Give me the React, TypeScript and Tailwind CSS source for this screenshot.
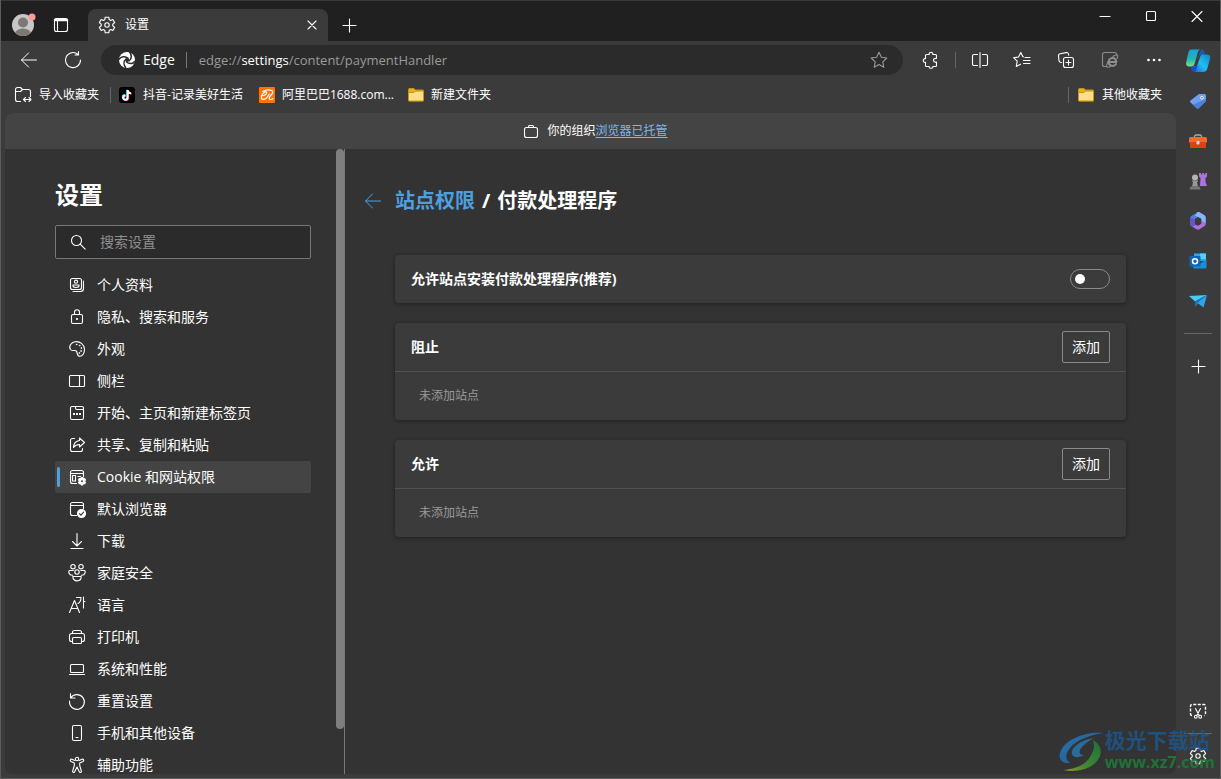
import React from 'react';

type IconProps = { children: React.ReactNode; className?: string; size?: number };

const Icon = ({ children, className = '', size = 20 }: IconProps) => (
  <svg
    width={size}
    height={size}
    viewBox="0 0 20 20"
    fill="none"
    stroke="currentColor"
    strokeWidth="1.1"
    strokeLinecap="round"
    strokeLinejoin="round"
    className={`shrink-0 ${className}`}
    aria-hidden="true"
  >
    {children}
  </svg>
);

const GearIcon = () => (
  <Icon>
    <path d="M8.2 2.2h3.6l.4 2.4 1.4.8 2.25-.85 1.8 3.1-1.9 1.55v1.6l1.9 1.55-1.8 3.1-2.25-.85-1.4.8-.4 2.4H8.2l-.4-2.4-1.4-.8-2.25.85-1.8-3.1 1.9-1.55V9.2l-1.9-1.55 1.8-3.1 2.25.85 1.4-.8z" />
    <circle cx="10" cy="10" r="2.2" />
  </Icon>
);

const BackIcon = () => (
  <Icon>
    <path d="M17.5 10H2.5M9.5 3l-7 7 7 7" strokeWidth="1" />
  </Icon>
);

const PlusIcon = () => (
  <Icon>
    <path d="M10.5 4v13M4 10.5h13" />
  </Icon>
);

const FolderIcon = () => (
  <svg width="16" height="16" viewBox="0 0 16 16" className="shrink-0" aria-hidden="true">
    <path d="M.5 2.5A1 1 0 0 1 1.5 1.5h4.500l1.500 1.500h7a1 1 0 0 1 1 1v9a1 1 0 0 1-1 1h-13a1 1 0 0 1-1-1z" fill="#e8b21e" stroke="#c69214" />
    <path d="M.5 5.500h5.500l1.500-1.500h8v9a1 1 0 0 1-1 1h-13a1 1 0 0 1-1-1z" fill="#ffdf87" stroke="#c69214" />
  </svg>
);

const EdgeIcon = () => (
  <svg width="16" height="16" viewBox="0 0 16 16" className="shrink-0" aria-hidden="true">
    <circle cx="8" cy="8" r="8" fill="#fff" />
    <circle cx="8.200" cy="8" r="2.100" fill="#2b2b2b" />
    <g fill="none" stroke="#2b2b2b" strokeWidth="1.500">
      <path d="M-.2 7.600C2 4.300 6 3.800 9.500 6.500" />
      <path d="M7 15.900C4.500 13.200 4.300 9.500 7 7" />
      <path d="M16 9.200c-2.200 3-6 3.200-8.800.5" />
      <path d="M10.500-.2c2.300 3 2.400 6.700-.6 9.500" />
    </g>
  </svg>
);

const TikTokIcon = () => (
  <svg width="16" height="16" viewBox="0 0 16 16" className="shrink-0" aria-hidden="true">
    <rect width="16" height="16" rx="3" fill="#000" />
    <g fill="none" strokeWidth="1.800">
      <path d="M8.100 2.700v7.500a2.200 2.200 0 1 1-2.200-2.200M8.100 2.900c.3 2 1.600 3 3.400 3.100" stroke="#25f4ee" />
      <path d="M9.300 3.500v7.500a2.200 2.200 0 1 1-2.200-2.200M9.300 3.700c.3 2 1.600 3 3.400 3.100" stroke="#fe2c55" />
      <path d="M8.700 3.100v7.500a2.200 2.200 0 1 1-2.200-2.200M8.700 3.300c.3 2 1.600 3 3.400 3.100" stroke="#fff" />
    </g>
  </svg>
);

const AlibabaIcon = () => (
  <svg width="16" height="16" viewBox="0 0 16 16" className="shrink-0" aria-hidden="true">
    <rect width="16" height="16" rx="1" fill="#ff7300" />
    <path
      d="M2.500 8.700c2.400.3 4.900-1 5.200-2.900.2-1.400-2.100-1.200-3.600.6-1.700 2-2.700 5.600-.4 6 2.500.4 5-2.500 6.400-5.200M3.800 4.400c3-1.800 7.200-1.600 9.300-.6 1.600.9.500 2.600-.7 3.800-1.600 1.600-2.800 3-2 4.300.7 1 2.300.7 3.600-.3"
      fill="none"
      stroke="#fff"
      strokeWidth="1.200"
      strokeLinecap="round"
    />
  </svg>
);

const menuItems = [
  {
    label: '个人资料',
    icon: (
      <>
        <rect x="3.500" y="3.500" width="11" height="11" rx="2" />
        <circle cx="9" cy="6.700" r="1.600" />
        <path d="M6 10h6v.8c0 2.200-6 2.200-6 0zM16.500 6v7.500a3 3 0 0 1-3 3H6" />
      </>
    ),
  },
  {
    label: '隐私、搜索和服务',
    icon: (
      <>
        <rect x="4.500" y="7.500" width="11" height="9" rx="1.500" />
        <path d="M7.500 7.500V5.200a2.500 2.500 0 0 1 5 0v2.300" />
        <circle cx="10" cy="12" r=".5" fill="currentColor" />
      </>
    ),
  },
  {
    label: '外观',
    icon: (
      <>
        <path d="M3.500 10.500C1.200 7.500 4.200 3.300 8 2.700c5-.8 9.300 2.800 9.500 7.600.1 3.800-2 7-4.700 7-3.300 0-2-3.800-3.500-5.300-1.500-1.600-3.700.9-5.800-1.500z" />
        <g fill="currentColor" strokeWidth=".8">
          <circle cx="9.500" cy="5.500" r=".4" />
          <circle cx="12.500" cy="6.500" r=".4" />
          <circle cx="14.200" cy="9" r=".4" />
          <circle cx="14" cy="12" r=".4" />
          <circle cx="12.200" cy="14" r=".4" />
        </g>
      </>
    ),
  },
  {
    label: '侧栏',
    icon: (
      <>
        <rect x="2.500" y="4.500" width="15" height="11" rx="1" />
        <path d="M12.500 4.500v11" />
      </>
    ),
  },
  {
    label: '开始、主页和新建标签页',
    icon: (
      <>
        <rect x="3.500" y="3.500" width="13" height="13" rx="1.500" />
        <path d="M8.500 3.500v1.500q0 1.500 1.500 1.500h6.500" />
        <path d="M6 11h2M9 11h2M12 11h2" strokeWidth="2" strokeLinecap="butt" />
      </>
    ),
  },
  {
    label: '共享、复制和粘贴',
    icon: (
      <>
        <path d="M7.500 3.500h-2a2 2 0 0 0-2 2v9a2 2 0 0 0 2 2h8a2 2 0 0 0 2-2v-1" />
        <path d="M12.500 3l5 4.500-5 4.500V9.500c-3 0-4.500 1-6 3 .2-4 2.200-6.500 6-7z" />
      </>
    ),
  },
  {
    label: 'Cookie 和网站权限',
    active: true,
    icon: (
      <>
        <path d="M16.500 9.500v-4a2 2 0 0 0-2-2h-9a2 2 0 0 0-2 2v9a2 2 0 0 0 2 2h4M3.500 6.500h13M11 9.500h2.500" />
        <rect x="5.500" y="8.500" width="3" height="5.500" />
        <path
          d="M14.200 10.500h1.600l.4 1.500 1.500-.4.800 1.400-1.100 1.200 1.100 1.200-.8 1.400-1.500-.4-.4 1.500h-1.600l-.4-1.500-1.500.4-.8-1.400 1.100-1.200-1.100-1.200.8-1.400 1.500.4z"
          fill="currentColor"
        />
        <circle cx="15" cy="14.200" r="1" fill="#444" stroke="none" />
      </>
    ),
  },
  {
    label: '默认浏览器',
    icon: (
      <>
        <path d="M16.500 9.500v-4a2 2 0 0 0-2-2h-9a2 2 0 0 0-2 2v9a2 2 0 0 0 2 2h4M3.500 6.500h13" />
        <circle cx="14.500" cy="14.500" r="4" fill="currentColor" />
        <path d="M12.500 14.700l1.400 1.400 2.700-2.900" stroke="#333" />
      </>
    ),
  },
  {
    label: '下载',
    icon: <path d="M10 2.500v12M5.500 10.500l4.500 4.500 4.500-4.500M4 17.500h12" />,
  },
  {
    label: '家庭安全',
    icon: (
      <>
        <circle cx="6" cy="3.700" r="2.200" />
        <circle cx="14" cy="3.700" r="2.200" />
        <circle cx="10" cy="9" r="2.200" />
        <path d="M6.200 7.500H2.700c-1.600 0-1.400 5 3 4.700M13.800 7.500h3.500c1.600 0 1.400 5-3 4.700M5.800 13.500h8.400c0 5.800-8.400 5.800-8.400 0z" />
      </>
    ),
  },
  {
    label: '语言',
    icon: <path d="M2.500 17.500L7.500 5.500l5 12M4.300 13.500h6.400M9.500 2.500h4.500c0 3-1 5-3 6M16.500 2v11M16.500 6.500h1.500" />,
  },
  {
    label: '打印机',
    icon: (
      <>
        <path d="M5.500 14.500h-1a2 2 0 0 1-2-2V8.500a2 2 0 0 1 2-2h11a2 2 0 0 1 2 2v4a2 2 0 0 1-2 2h-1" />
        <path d="M5.500 6.500v-1a2 2 0 0 1 2-2h5a2 2 0 0 1 2 2v1" />
        <rect x="5.500" y="10.500" width="9" height="6" rx="1" />
      </>
    ),
  },
  {
    label: '系统和性能',
    icon: (
      <>
        <rect x="3.500" y="5.500" width="13" height="8" rx="1" />
        <path d="M2.500 15.500h15" />
      </>
    ),
  },
  {
    label: '重置设置',
    icon: <path d="M3.500 2.500v4.500H8M3.700 7A7.400 7.400 0 1 1 2.600 10" />,
  },
  {
    label: '手机和其他设备',
    icon: (
      <>
        <rect x="5.500" y="2.500" width="9" height="15" rx="1.500" />
        <path d="M9 14.500h2" />
      </>
    ),
  },
  {
    label: '辅助功能',
    icon: (
      <>
        <circle cx="10" cy="4" r="1.700" />
        <path d="M7.800 5.500L5 4.300c-1.600-.6-2.400 1.400-1 2.100l3.300 1.500v2.600l-1.600 5.300c-.5 1.600 1.500 2.300 2.100.8L10 12l2.200 4.600c.6 1.500 2.600.8 2.100-.8l-1.600-5.300V7.900L16 6.400c1.400-.7.600-2.700-1-2.100l-2.800 1.200" />
      </>
    ),
  },
];

const toolbarButton = 'flex w-11 h-8 items-center justify-center';

const siteGroups = ['阻止', '允许'];

const TitleBar = () => (
  <header className="flex h-[41px] shrink-0 items-stretch bg-[#202020] border-t border-[#383838]">
    <div className="flex w-[87px] items-center gap-[14px] pt-2 pl-[10px]">
      <button aria-label="Profile">
        <svg width="26" height="26" viewBox="0 0 26 26" aria-hidden="true">
          <clipPath id="avatar">
            <circle cx="12" cy="13" r="11" />
          </clipPath>
          <circle cx="12" cy="13" r="11" fill="#c9c7c5" />
          <g clipPath="url(#avatar)" fill="#7b7875">
            <circle cx="12" cy="10.500" r="5" />
            <ellipse cx="12" cy="22" rx="8" ry="5.500" />
          </g>
          <circle cx="21" cy="5" r="3.500" fill="#ff9b94" />
        </svg>
      </button>
      <button aria-label="Tab actions">
        <Icon>
          <rect x="3.500" y="3.500" width="13" height="13" rx="2" />
          <path d="M4 5h12" strokeWidth="2.500" />
          <path d="M6.500 5v11.500" />
        </Icon>
      </button>
    </div>
    <div className="mt-2 flex w-60 items-center rounded-t-lg bg-[#3b3b3b] pr-1 pl-[9px]">
      <GearIcon />
      <span className="ml-2 flex-1 text-xs">设置</span>
      <button aria-label="Close tab" className="flex w-6 justify-center">
        <Icon>
          <path d="M6 6l8 8M14 6l-8 8" />
        </Icon>
      </button>
    </div>
    <button aria-label="New tab" className="ml-[11px] pt-2">
      <PlusIcon />
    </button>
    <div className="ml-auto flex h-[31px]">
      <button aria-label="Minimize" className="flex w-[46px] items-center justify-center">
        <Icon>
          <path d="M5 9.500h10" />
        </Icon>
      </button>
      <button aria-label="Maximize" className="flex w-[46px] items-center justify-center">
        <Icon>
          <rect x="5.500" y="4.500" width="9" height="9" rx="1" />
        </Icon>
      </button>
      <button aria-label="Close" className="flex w-[46px] items-center justify-center">
        <Icon>
          <path d="M5 4.500l10 10M15 4.500l-10 10" />
        </Icon>
      </button>
    </div>
  </header>
);

const Toolbar = () => (
  <div className="flex h-[38px] shrink-0 items-center pl-[6px]">
    <button aria-label="Back" className={toolbarButton}>
      <BackIcon />
    </button>
    <button aria-label="Refresh" className={toolbarButton}>
      <Icon>
        <path d="M17.500 10a7.500 7.500 0 1 1-2.500-5.500M15.500 1.500v3.500h-3.500" />
      </Icon>
    </button>
    <div className="ml-[6px] flex h-[30px] flex-1 items-center rounded-full bg-[#2b2b2b] pr-[14px] pl-[18px] text-sm">
      <EdgeIcon />
      <span className="ml-2">Edge</span>
      <span className="mr-3 ml-[11px] h-4 w-px bg-[#777]" />
      <span className="flex-1 text-[13px] text-[#9a9a9a]">
        edge://<span className="text-white">settings</span>/content/paymentHandler
      </span>
      <button aria-label="Add to favorites" className="text-[#9a9a9a]">
        <Icon>
          <path d="M10 2.300l2.400 5 5.400.7-4 3.800 1 5.500-4.800-2.700-4.800 2.700 1-5.500-4-3.800 5.400-.7z" />
        </Icon>
      </button>
    </div>
    <button aria-label="Extensions" className="ml-2 flex h-8 w-10 items-center justify-center">
      <Icon>
        <path d="M5.500 4.500h2.700c-.7-3 4.300-3 3.600 0h2.700a1 1 0 0 1 1 1v3c-4-1-4 4.500 0 3.500v3.500a1 1 0 0 1-1 1h-2.700c.8 2.400-4.400 2.400-3.600 0H5.500a1 1 0 0 1-1-1v-3.200c-3 .7-3-4.300 0-3.600V5.500a1 1 0 0 1 1-1z" />
      </Icon>
    </button>
    <span className="mx-1 h-4 w-px bg-[#666]" />
    <button aria-label="Split screen" className="flex h-8 w-10 items-center justify-center">
      <Icon>
        <path d="M7.500 4.500H4a1.500 1.500 0 0 0-1.500 1.500v8A1.500 1.500 0 0 0 4 15.500h3.500M12.500 4.500H16a1.500 1.500 0 0 1 1.500 1.500v8a1.500 1.500 0 0 1-1.500 1.500h-3.500M10 2.500v15" />
      </Icon>
    </button>
    <button aria-label="Favorites" className={toolbarButton}>
      <Icon>
        <path d="M11.500 6.700h-.6L8.800 2.500 6.500 7l-5 .7 3.700 3.500-.9 5.300 4.200-2.300M13 7.500h5M11.500 10.500H18M11.500 13.500H18" />
      </Icon>
    </button>
    <button aria-label="Collections" className={toolbarButton}>
      <Icon>
        <rect x="7.500" y="7.500" width="10" height="10" rx="2" />
        <path d="M12.500 10v5M10 12.500h5M5.500 12.500l-1-.2a2 2 0 0 1-1.500-1.700L2.500 6a2 2 0 0 1 1.700-2.200l6-1.200a2 2 0 0 1 2.300 1.500l.2 1.200" />
      </Icon>
    </button>
    <button aria-label="Internet Explorer mode" className={`${toolbarButton} text-[#8d8d8d]`}>
      <Icon>
        <path d="M16.500 5v-.5a2 2 0 0 0-2-2h-10a2 2 0 0 0-2 2v10a2 2 0 0 0 2 2h1" />
        <path d="M8 12h8.300c0-5.500-7.600-5-7.600.2 0 4.300 5.500 4.700 7.300 1.800" strokeWidth="2" />
        <path d="M8 12c-1.500 2.500-2.200 5-.5 5.300 1.500.2 3-1 4-2M13 6.500c2-1.600 4.300-2.300 4.700-1 .2.900-.2 2-.7 3" />
      </Icon>
    </button>
    <button aria-label="Settings and more" className={toolbarButton}>
      <Icon>
        <g fill="currentColor" stroke="none">
          <circle cx="4.500" cy="10" r="1.300" />
          <circle cx="10" cy="10" r="1.300" />
          <circle cx="15.500" cy="10" r="1.300" />
        </g>
      </Icon>
    </button>
  </div>
);

const BookmarksBar = () => (
  <nav className="flex h-[34px] shrink-0 items-center pr-[14px] pb-[2px] pl-[12px] text-xs whitespace-nowrap">
    <a href="#" className="flex items-center gap-[6px]">
      <Icon>
        <path d="M7.500 16.500h-3a2 2 0 0 1-2-2V4.500a2 2 0 0 1 2-2h3l2 2h6a2 2 0 0 1 2 2v5M2.500 6.500h5l2-2M11 14.500h7M12.500 12.500l-2 2 2 2M16 12.500l2 2-2 2" />
      </Icon>
      导入收藏夹
    </a>
    <span className="mr-2 ml-[11px] h-4 w-px bg-[#666]" />
    <a href="#" className="flex items-center gap-2">
      <TikTokIcon />
      抖音-记录美好生活
    </a>
    <a href="#" className="ml-4 flex items-center gap-[7px]">
      <AlibabaIcon />
      阿里巴巴1688.com...
    </a>
    <a href="#" className="ml-[14px] flex items-center gap-[7px]">
      <FolderIcon />
      新建文件夹
    </a>
    <span className="mr-[9px] ml-auto h-4 w-px bg-[#666]" />
    <a href="#" className="flex items-center gap-2">
      <FolderIcon />
      其他收藏夹
    </a>
  </nav>
);

const SettingsMenu = () => (
  <aside className="flex w-[340px] shrink-0 border-r border-[#777]">
    <div className="flex flex-1 flex-col pr-[25px] pl-[50px]">
      <h1 className="mt-[30px] text-2xl leading-8 font-bold">设置</h1>
      <label className="mt-[14px] flex h-[34px] shrink-0 items-center rounded-xs border border-[#767676] bg-[#2b2b2b] px-3">
        <Icon>
          <circle cx="8.500" cy="8.500" r="5" />
          <path d="M12.200 12.200l5 5" />
        </Icon>
        <input
          type="text"
          aria-label="搜索设置"
          placeholder="搜索设置"
          className="ml-3 w-full min-w-0 bg-transparent text-sm outline-none placeholder:text-[#8f8f8f]"
        />
      </label>
      <ul className="mt-[10px]">
        {menuItems.map((item) => (
          <li key={item.label}>
            <a
              href="#"
              className={`flex h-8 items-center rounded-xs text-sm ${item.active ? 'bg-[#444]' : ''}`}
            >
              <span className={`ml-[2px] h-5 w-[3px] rounded-full ${item.active ? 'bg-[#4ca0e0]' : ''}`} />
              <Icon className="mr-[10px] ml-[7px]">{item.icon}</Icon>
              {item.label}
            </a>
          </li>
        ))}
      </ul>
    </div>
    <div className="h-[580px] w-2 rounded-full bg-[#7f7f7f]" />
  </aside>
);

const Content = () => (
  <main className="min-w-0 flex-1 pr-[50px] pl-[18px]">
    <div className="mt-9 flex h-8 items-center">
      <a href="#" aria-label="Back" className="text-[#4ca0e0]">
        <BackIcon />
      </a>
      <h2 className="ml-3 flex gap-[7px] text-xl font-bold">
        <a href="#" className="text-[#4ca0e0]">
          站点权限
        </a>
        <span>/</span>
        <span>付款处理程序</span>
      </h2>
    </div>
    <div className="mt-[38px] ml-8 space-y-5">
      <section className="flex h-12 items-center justify-between rounded bg-[#3b3b3b] px-4 shadow-[0_1px_4px_rgba(0,0,0,0.4)]">
        <label htmlFor="payment-handler" className="text-sm font-bold">
          允许站点安装付款处理程序(推荐)
        </label>
        <input
          id="payment-handler"
          type="checkbox"
          role="switch"
          className="flex h-5 w-10 appearance-none items-center rounded-full border border-[#8a8a8a] px-1 before:h-[10px] before:w-[10px] before:rounded-full before:bg-white checked:justify-end"
        />
      </section>
      {siteGroups.map((title) => (
        <section key={title} className="rounded bg-[#3b3b3b] shadow-[0_1px_4px_rgba(0,0,0,0.4)]">
          <div className="flex h-[49px] items-center justify-between border-b border-[#525252] px-4">
            <h3 className="text-sm font-bold">{title}</h3>
            <button className="h-8 w-12 rounded-xs border border-[#8a8a8a] text-sm">添加</button>
          </div>
          <p className="flex h-12 items-center px-6 text-xs text-[#9a9a9a]">未添加站点</p>
        </section>
      ))}
    </div>
  </main>
);

const sidebarApps = [
  {
    label: 'Copilot',
    icon: (
      <svg width="26" height="26" viewBox="0 0 26 26" aria-hidden="true">
        <defs>
          <linearGradient id="copilotA" x1="0" y1="0" x2="0" y2="1">
            <stop offset="0" stopColor="#1aa0e6" />
            <stop offset=".55" stopColor="#23b5b0" />
            <stop offset="1" stopColor="#7be08a" />
          </linearGradient>
          <linearGradient id="copilotB" x1="1" y1="0" x2="0" y2="1">
            <stop offset="0" stopColor="#1b7fc4" />
            <stop offset=".5" stopColor="#1ec0f5" />
            <stop offset="1" stopColor="#1d55d8" />
          </linearGradient>
        </defs>
        <path d="M16 1.500c2.300 0 3 1 3.500 3l.8 2.700h-5l-3.500 4.800z" fill="#155da9" />
        <path d="M14.800 10c.6-2.500 1.500-3.500 3.500-3.500h3.500c2.800 0 4 1.500 3.300 4l-2.800 10c-.7 2.400-2 3.500-4.300 3.500H10c-2 0-2.800-1-3.300-3L6.200 18.500h3c2 0 3-.7 3.500-2.500z" fill="url(#copilotB)" />
        <path d="M6.500 1.500H16c-2 0-2.800 1.500-3.400 3.500L9.700 15.500c-.6 2-1.800 3-3.500 3H4.500c-2.800 0-4-1.800-3.300-4.300L3.200 5c.7-2.400 1.500-3.500 3.300-3.500z" fill="url(#copilotA)" />
        <path d="M6.500 18.500h3c2 0 3-.7 3.500-2.500l-2.500 8H10c-2 0-2.700-1-3.200-3z" fill="#1c49cf" />
      </svg>
    ),
  },
  {
    label: 'Shopping',
    icon: (
      <svg width="20" height="20" viewBox="0 0 20 20" aria-hidden="true">
        <path d="M11 3h5.500A1.500 1.500 0 0 1 18 4.500V10l-7.300 7.300a1.500 1.500 0 0 1-2 0L2.500 11.500a1.500 1.500 0 0 1 0-2z" fill="#6ea0ee" />
        <path d="M18 8v2l-7.300 7.300a1.500 1.500 0 0 1-2 0L5 13.700z" fill="#4f7fd6" />
        <circle cx="14" cy="6.800" r="1.700" fill="#fff" />
        <circle cx="14" cy="6.800" r=".8" fill="#444" />
      </svg>
    ),
  },
  {
    label: 'Tools',
    icon: (
      <svg width="20" height="20" viewBox="0 0 20 20" aria-hidden="true">
        <path d="M6.500 7V5.500a1.500 1.500 0 0 1 1.500-1.500h4a1.500 1.500 0 0 1 1.500 1.500V7" fill="none" stroke="#aaa" strokeWidth="1.300" />
        <rect x="1" y="6" width="18" height="6" rx="1.500" fill="#f06a32" />
        <path d="M2 11h16v5a1 1 0 0 1-1 1H3a1 1 0 0 1-1-1z" fill="#d64511" />
        <rect x="8.500" y="10" width="3" height="3.500" rx="1" fill="#d8d8d8" />
      </svg>
    ),
  },
  {
    label: 'Games',
    icon: (
      <svg width="20" height="20" viewBox="0 0 20 20" aria-hidden="true">
        <path d="M11 2h2v1.500h1.200V2h1.800v1.500h1.200V2H19v3.500l-1.500 1.500v4l1.500 4h-7l.5-8L11 5.500z" fill="#b072dd" />
        <circle cx="7" cy="6.500" r="3" fill="#b5b5b5" />
        <path d="M4 9.500h6v1.300H8.800l1.200 4.700H4l1.200-4.700H4z" fill="#999" />
        <path d="M2.500 15.500h9l1 3h-11z" fill="#777" />
      </svg>
    ),
  },
  {
    label: 'Microsoft 365',
    icon: (
      <svg width="20" height="20" viewBox="0 0 20 20" aria-hidden="true">
        <path d="M10.500 1L4 4.500A3 3 0 0 0 2.200 7v6c0 1 .6 2 1.600 2.500l3.200-2V8L13 4.500z" fill="#4f7fe0" />
        <path d="M9 1.500c1-.6 2-.6 3 0l4.200 2.600A3 3 0 0 1 17.800 7v5.500L13.200 10V7.800L7 4.500z" fill="#86b5ff" />
        <path d="M17.800 12.500c0 1.500-.8 2.300-1.600 2.800l-4.700 2.900a3 3 0 0 1-3 0l-4.700-2.700 3.200-2 3 1.200 3.200-2V9.500z" fill="#ab72dd" />
        <path d="M2.200 7v6c0 1 .6 2 1.600 2.500 1.500.3 3.200-.5 3.200-2V8z" fill="#6655c9" />
        <path d="M7 8l3-1.800 3.200 1.800v4L10 14l-3-1.500z" fill="#3b3b3b" />
      </svg>
    ),
  },
  {
    label: 'Outlook',
    icon: (
      <svg width="20" height="20" viewBox="0 0 20 20" aria-hidden="true">
        <path d="M6 2.500h11a1 1 0 0 1 1 1V10H6z" fill="#2aa5ee" />
        <path d="M12 2.500h6V8h-6z" fill="#50d0ff" />
        <path d="M5 9l6.500 4L18.500 8.500V16a1.500 1.500 0 0 1-1.500 1.500H6.500A1.500 1.500 0 0 1 5 16z" fill="#1490df" />
        <rect x="1.500" y="5" width="11" height="10.500" rx="1" fill="#0f64b8" />
        <circle cx="7" cy="10.200" r="2.500" fill="none" stroke="#fff" strokeWidth="1.500" />
      </svg>
    ),
  },
  {
    label: 'Drop',
    icon: (
      <svg width="20" height="20" viewBox="0 0 20 20" aria-hidden="true">
        <path d="M1 5L19 4 7 10.500z" fill="#4cc8f5" />
        <path d="M19 4L7 10.500v5.500l3.200-3.500z" fill="#1378c4" />
        <path d="M19 4l-3.500 12.500-6-4.500z" fill="#2fa4e8" />
      </svg>
    ),
  },
];

const AppSidebar = () => (
  <aside className="flex w-11 shrink-0 flex-col items-center">
    {sidebarApps.map((app) => (
      <button key={app.label} aria-label={app.label} className="flex h-10 w-10 shrink-0 items-center justify-center">
        {app.icon}
      </button>
    ))}
    <span className="my-3 h-px w-7 shrink-0 bg-[#666]" />
    <button aria-label="Customize" className="flex h-10 w-10 items-center justify-center">
      <PlusIcon />
    </button>
    <button aria-label="Screenshot" className="mt-auto flex h-11 w-10 items-center justify-center">
      <Icon>
        <path d="M4 14.500a1.500 1.500 0 0 1-1.500-1.500V5A1.500 1.500 0 0 1 4 3.500h12A1.500 1.500 0 0 1 17.500 5v8a1.500 1.500 0 0 1-1.500 1.500" strokeDasharray="3 1.500" strokeLinecap="butt" strokeWidth="1.400" />
        <path d="M7.500 7.500l3.700 7M12.500 7.500l-3.700 7" />
        <circle cx="7.800" cy="15.700" r="1.400" />
        <circle cx="12.200" cy="15.700" r="1.400" />
      </Icon>
    </button>
    <span className="h-px w-7 shrink-0 bg-[#666]" />
    <button aria-label="Sidebar settings" className="flex h-11 w-10 items-center justify-center">
      <GearIcon />
    </button>
  </aside>
);

const SiteLogo = () => (
  <div className="pointer-events-none absolute right-[5px] bottom-1 flex items-center gap-[2px] font-bold opacity-90">
    <svg width="44" height="42" viewBox="0 0 44 42" aria-hidden="true">
      <defs>
        <linearGradient id="swirl" x1="0" y1="0" x2="1" y2="1">
          <stop offset="0" stopColor="#2a7ab8" />
          <stop offset="1" stopColor="#1d5f9c" />
        </linearGradient>
        <linearGradient id="leaf" x1="1" y1="0" x2="0" y2="1">
          <stop offset="0" stopColor="#1c7a3a" />
          <stop offset=".6" stopColor="#3f8f35" />
          <stop offset="1" stopColor="#a8a02c" />
        </linearGradient>
      </defs>
      <path d="M44 2C28 0 5 8 1 22c-2 7 3 11 10 10-4-3-5-7-2-12C14 11 26 5 44 2z" fill="url(#swirl)" />
      <path d="M35 7C22 9 12 16 13 23c1 4 7 4 12 1-4 0-5-2-4-5 2-4 7-8 14-12z" fill="#2873a8" />
      <path d="M34 9c9 5 10 14 4 21-6 8-20 12-34 9 12-1 22-5 27-13 4-6 5-11 3-17z" fill="url(#leaf)" />
    </svg>
    <div>
      <div className="text-[21px] leading-5 text-[#1c5587]">极光下载站</div>
      <div className="text-base leading-6 text-[#1d7a38]">www.xz7.com</div>
    </div>
  </div>
);

const App: React.FC = () => (
  <div className="relative flex h-screen flex-col overflow-hidden border-x border-b border-[#5c5c5c] bg-[#3b3b3b] font-['Open_Sans','Noto_Sans_CJK_SC',sans-serif] text-white">
    <TitleBar />
    <div className="flex min-h-0 flex-1">
      <div className="flex min-w-0 flex-1 flex-col">
        <Toolbar />
        <BookmarksBar />
        <div className="mb-1 ml-1 flex min-h-0 flex-1 flex-col overflow-hidden rounded-lg bg-[#333]">
          <div className="flex h-9 shrink-0 items-center justify-center gap-[6px] bg-[#444] pl-2 text-xs">
            <Icon>
              <rect x="3.500" y="6.500" width="13" height="10" rx="2" />
              <path d="M7.500 6.500v-1a1 1 0 0 1 1-1h3a1 1 0 0 1 1 1v1" />
            </Icon>
            <p>
              你的组织
              <a href="#" className="text-[#7ab8ee] underline underline-offset-2">
                浏览器已托管
              </a>
            </p>
          </div>
          <div className="flex min-h-0 flex-1">
            <SettingsMenu />
            <Content />
          </div>
        </div>
      </div>
      <AppSidebar />
    </div>
    <SiteLogo />
  </div>
);

export default App;
